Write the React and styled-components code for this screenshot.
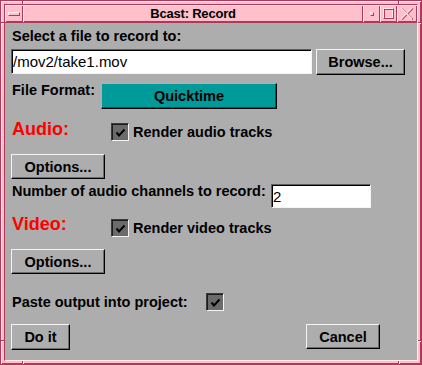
import React from 'react';
import styled, { createGlobalStyle } from 'styled-components';

const PINK = '#ffc0cb';
const PINK_DARK = '#b0385a';
const PINK_LIGHT = '#ffe8ee';
const GRAY = '#adadad';
const FONT = '"Liberation Sans", Arial, Helvetica, sans-serif';

const Global = createGlobalStyle`
  html, body { margin: 0; padding: 0; background: ${GRAY}; }
  * { box-sizing: border-box; }
`;

const Window = styled.div`
  position: relative;
  width: 422px;
  height: 365px;
  display: flex;
  padding: 3px;
  background: ${PINK};
  border: 1px solid ${PINK_DARK};
  box-shadow: inset 1px 1px 0 ${PINK_LIGHT}, inset -1px -1px 0 ${PINK_DARK};
  font-family: ${FONT};
`;

const Notch = styled.span`
  position: absolute;
  ${(p) =>
    p.$side === 'top' || p.$side === 'bottom'
      ? `width: 2px; height: 3px; ${p.$side}: 0; left: ${p.$at}px;
         border-left: 1px solid ${PINK_DARK}; border-right: 1px solid ${PINK_LIGHT};`
      : `width: 3px; height: 2px; ${p.$side}: 0; top: ${p.$at}px;
         border-top: 1px solid ${PINK_DARK}; border-bottom: 1px solid ${PINK_LIGHT};`}
`;

const Frame = styled.div`
  flex: 1;
  display: flex;
  flex-direction: column;
  border: 1px solid;
  border-color: ${PINK_DARK} ${PINK_LIGHT} ${PINK_LIGHT} ${PINK_DARK};
  background: ${GRAY};
`;

const TitleBar = styled.div`
  display: flex;
  height: 18px;
  flex: none;
  background: ${PINK};
  border-bottom: 1px solid ${PINK_DARK};
`;

const TitleCell = styled.div`
  flex: ${(p) => (p.$width ? `0 0 ${p.$width}px` : '1 1 auto')};
  display: flex;
  align-items: center;
  justify-content: center;
  box-shadow: inset 1px 1px 0 ${PINK_LIGHT}, inset -1px -1px 0 ${PINK_DARK};
`;

const TitleText = styled.span`
  font: bold 13px/16px ${FONT};
  letter-spacing: -0.2px;
  color: #000;
`;

const Bevel = styled.span`
  display: block;
  width: ${(p) => p.$w}px;
  height: ${(p) => p.$h}px;
  border: 1px solid;
  border-color: ${PINK_LIGHT} ${PINK_DARK} ${PINK_DARK} ${PINK_LIGHT};
  box-shadow: ${(p) => (p.$hollow ? `inset 1px 1px 0 ${PINK_DARK}, inset -1px -1px 0 ${PINK_LIGHT}` : 'none')};
  background: ${PINK};
`;

const Content = styled.div`
  flex: 1;
  display: flex;
  flex-direction: column;
  align-items: flex-start;
  padding: 5px 12px 0 6px;
  font: bold 14.5px/16px ${FONT};
  color: #000;
`;

const Label = styled.span`
  display: block;
  flex: none;
  width: ${(p) => (p.$w ? `${p.$w}px` : 'auto')};
  margin-top: ${(p) => p.$mt || 0}px;
  padding-left: 1px;
  white-space: nowrap;
`;

const SectionTitle = styled.span`
  display: block;
  flex: none;
  width: 100px;
  font: bold 18px/20px ${FONT};
  color: #ff0000;
  padding-left: 1px;
`;

const Row = styled.div`
  display: flex;
  align-items: ${(p) => p.$align || 'flex-start'};
  gap: ${(p) => p.$gap || 0}px;
  margin-top: ${(p) => p.$mt || 0}px;
  align-self: ${(p) => (p.$stretch ? 'stretch' : 'auto')};
  justify-content: ${(p) => p.$justify || 'flex-start'};
  padding-right: ${(p) => p.$pr || 0}px;
`;

const Button = styled.button`
  flex: none;
  width: ${(p) => p.$w}px;
  height: ${(p) => p.$h || 25}px;
  margin: ${(p) => p.$mt || 0}px 0 0 0;
  padding: 0;
  font: bold 14.5px/16px ${FONT};
  color: #000;
  background: ${GRAY};
  border: 1px solid;
  border-color: #f4f4f4 #000 #000 #f4f4f4;
  box-shadow: inset -1px -1px 0 #6c6c6c;
  cursor: default;
`;

const MenuButton = styled(Button)`
  background: #009a9a;
  border-color: #3fe0e0 #000 #000 #3fe0e0;
  box-shadow: inset -1px -1px 0 #005a5a;
`;

const TextField = styled.input`
  flex: none;
  width: ${(p) => p.$w}px;
  height: ${(p) => p.$h}px;
  margin: ${(p) => p.$mt || 0}px 0 0 0;
  padding: 0 0 0 1px;
  border: 1px solid;
  border-color: #5e5e5e #f4f4f4 #f4f4f4 #5e5e5e;
  box-shadow: inset 1px 1px 0 #000;
  background: #fff;
  font: 15px/20px ${FONT};
  color: #000;
  outline: none;
`;

const CheckGroup = styled.label`
  display: flex;
  align-items: center;
  gap: 4px;
  margin-top: ${(p) => p.$mt || 0}px;
`;

const CheckBox = styled.span`
  flex: none;
  width: 18px;
  height: 18px;
  display: flex;
  align-items: center;
  justify-content: center;
  border: 1px solid;
  border-color: #3a3a3a #f4f4f4 #f4f4f4 #3a3a3a;
  box-shadow: inset 1px 1px 0 #1c1c1c;
  background: #6b6b6b;
`;

const Check = () => (
  <CheckBox>
    <svg width="11" height="9" viewBox="0 0 11 9">
      <path d="M1.5 4.5 L4 7.5 L9.5 1.5" fill="none" stroke="#000" strokeWidth="2" />
    </svg>
  </CheckBox>
);

const CloseIcon = () => (
  <svg width="14" height="13" viewBox="0 0 14 13">
    <path d="M1 1 L12 12 M12 1 L1 12" stroke={PINK_DARK} strokeWidth="1.2" fill="none" transform="translate(1 0.5)" />
    <path d="M1 1 L12 12 M12 1 L1 12" stroke={PINK_LIGHT} strokeWidth="1.2" fill="none" />
  </svg>
);

export default function App() {
  return (
    <>
      <Global />
      <Window>
        <Notch $side="top" $at={21} />
        <Notch $side="top" $at={397} />
        <Notch $side="bottom" $at={21} />
        <Notch $side="bottom" $at={397} />
        <Notch $side="left" $at={21} />
        <Notch $side="left" $at={339} />
        <Notch $side="right" $at={21} />
        <Notch $side="right" $at={339} />
        <Frame>
          <TitleBar>
            <TitleCell $width={18}>
              <Bevel $w={12} $h={4} />
            </TitleCell>
            <TitleCell>
              <TitleText>Bcast: Record</TitleText>
            </TitleCell>
            <TitleCell $width={17}>
              <Bevel $w={4} $h={4} />
            </TitleCell>
            <TitleCell $width={17}>
              <Bevel $w={11} $h={11} $hollow />
            </TitleCell>
            <TitleCell $width={20}>
              <CloseIcon />
            </TitleCell>
          </TitleBar>
          <Content>
            <Label>Select a file to record to:</Label>
            <Row $mt={5} $gap={4}>
              <TextField $w={301} $h={25} $mt={0} defaultValue="/mov2/take1.mov" readOnly />
              <Button $w={89} $h={26}>Browse...</Button>
            </Row>
            <Row $mt={7}>
              <Label $w={90}>File Format:</Label>
              <MenuButton $w={176} $h={26} $mt={1}>Quicktime</MenuButton>
            </Row>
            <Row $mt={10}>
              <SectionTitle>Audio:</SectionTitle>
              <CheckGroup $mt={4}>
                <Check />
                <span>Render audio tracks</span>
              </CheckGroup>
            </Row>
            <Button $w={94} $h={25} $mt={13}>Options...</Button>
            <Row $mt={4}>
              <Label $w={260}>Number of audio channels to record:</Label>
              <TextField $w={100} $h={24} $mt={1} defaultValue="2" readOnly />
            </Row>
            <Row $mt={6}>
              <SectionTitle>Video:</SectionTitle>
              <CheckGroup $mt={5}>
                <Check />
                <span>Render video tracks</span>
              </CheckGroup>
            </Row>
            <Button $w={94} $h={25} $mt={12}>Options...</Button>
            <Row $mt={19} $align="center">
              <Label $w={195}>Paste output into project:</Label>
              <Check />
            </Row>
            <Row $mt={13} $stretch $justify="space-between" $pr={25}>
              <Button $w={59} $h={26}>Do it</Button>
              <Button $w={74} $h={25}>Cancel</Button>
            </Row>
          </Content>
        </Frame>
      </Window>
    </>
  );
}
